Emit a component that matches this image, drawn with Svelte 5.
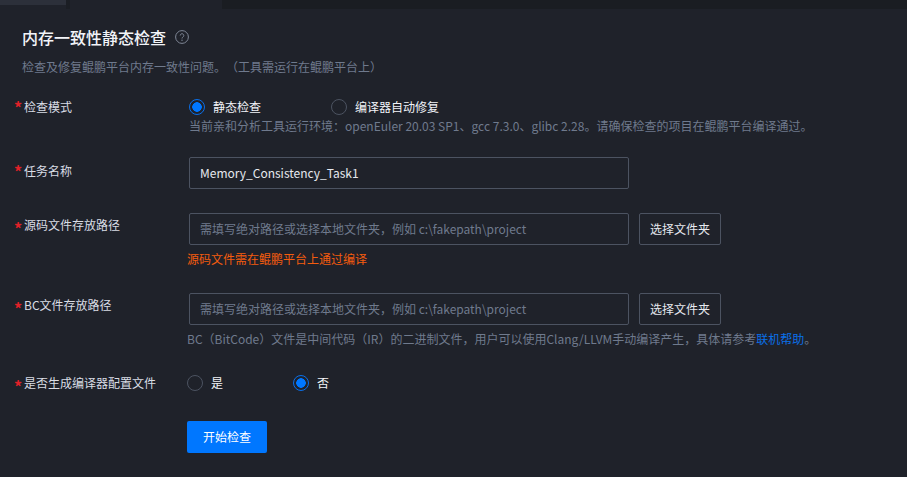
<script lang="ts">
  const placeholder = '需填写绝对路径或选择本地文件夹，例如 c:\\fakepath\\project';
</script>

<div class="page">
  <div class="tabs">
    <div class="tab-active"></div>
    <div class="tab-edge"></div>
    <div class="tab-current"></div>
    <div class="tab-rest"></div>
  </div>

  <div class="head">
    <h3 class="title">内存一致性静态检查</h3>
    <svg class="help" width="14" height="14" viewBox="0 0 14 14" fill="none">
      <circle cx="7" cy="7" r="6.4" stroke="#7f8796" stroke-width="1" />
      <path d="M5.2 5.5a1.8 1.8 0 1 1 2.7 1.6c-.6.35-.9.7-.9 1.4" stroke="#7f8796" stroke-width="1" />
      <circle cx="7" cy="10.2" r=".7" fill="#7f8796" />
    </svg>
  </div>
  <p class="desc">检查及修复鲲鹏平台内存一致性问题。（工具需运行在鲲鹏平台上）</p>

  <div class="row row-mode">
    <span class="label">检查模式</span>
    <div class="field field-mode">
      <div class="radios radios-mode">
        <span class="radio-item item-static"><i class="radio on"></i>静态检查</span>
        <span class="radio-item"><i class="radio"></i>编译器自动修复</span>
      </div>
      <div class="hint hint-mode">当前亲和分析工具运行环境：openEuler 20.03 SP1、gcc 7.3.0、glibc 2.28。请确保检查的项目在鲲鹏平台编译通过。</div>
    </div>
  </div>

  <div class="row row-name">
    <span class="label">任务名称</span>
    <div class="field field-input">
      <div class="input value">Memory_Consistency_Task1</div>
    </div>
  </div>

  <div class="row row-src">
    <span class="label low">源码文件存放路径</span>
    <div class="field">
      <div class="input-line">
        <div class="input">{placeholder}</div>
        <div class="btn-outline">选择文件夹</div>
      </div>
      <div class="error">源码文件需在鲲鹏平台上通过编译</div>
    </div>
  </div>

  <div class="row row-bc">
    <span class="label low">BC文件存放路径</span>
    <div class="field">
      <div class="input-line">
        <div class="input">{placeholder}</div>
        <div class="btn-outline">选择文件夹</div>
      </div>
      <div class="hint">BC（BitCode）文件是中间代码（IR）的二进制文件，用户可以使用Clang/LLVM手动编译产生，具体请参考<span class="link">联机帮助</span>。</div>
    </div>
  </div>

  <div class="row row-config">
    <span class="label low">是否生成编译器配置文件</span>
    <div class="field">
      <div class="radios">
        <span class="radio-item item-yes"><i class="radio"></i>是</span>
        <span class="radio-item"><i class="radio on"></i>否</span>
      </div>
    </div>
  </div>

  <div class="submit">开始检查</div>
</div>

<style>
  :global(body) {
    background: #1f222a;
  }

  .page {
    height: 477px;
    overflow: hidden;
    background: #1f222a;
    color: #e6e9ef;
    font-family: "Noto Sans CJK SC", "Noto Sans", sans-serif;
    font-size: 12px;
    line-height: 18px;
    text-spacing-trim: space-all;
  }

  .tabs {
    display: flex;
    height: 9px;
  }

  .tab-active {
    width: 66px;
    height: 5px;
    background: #2c303a;
  }

  .tab-edge {
    width: 4px;
    background: #1b1e24;
  }

  .tab-current {
    width: 152px;
    background: #1f222a;
  }

  .tab-rest {
    flex: 1;
    background: #1a1d22;
  }

  .head {
    display: flex;
    align-items: center;
    gap: 9px;
    margin: 16px 0 0 22px;
    height: 24px;
  }

  .title {
    margin: 0;
    font-size: 16px;
    font-weight: 500;
    color: #f2f4f8;
  }

  .desc {
    margin: 9px 0 0 22px;
    color: #6f7a8d;
    line-height: 18px;
  }

  .row {
    display: flex;
  }

  .label {
    position: relative;
    width: 163px;
    margin-left: 24px;
    color: #d9dde5;
    line-height: 18px;
  }

  .label::before {
    content: "*";
    position: absolute;
    left: -10px;
    top: 0;
    color: #e02128;
    font-size: 16px;
    font-weight: 700;
  }

  .label.low::before {
    top: 3px;
  }

  .row-mode {
    margin-top: 22px;
  }

  .field-mode {
    padding-left: 2px;
  }

  .radios {
    display: flex;
    height: 18px;
    align-items: center;
  }

  .radio-item {
    display: flex;
    align-items: center;
    color: #f2f4f8;
  }

  .item-static {
    width: 142px;
  }

  .item-yes {
    width: 106px;
  }

  .radio {
    box-sizing: border-box;
    width: 16px;
    height: 16px;
    margin-right: 8px;
    border: 1px solid #4c5361;
    border-radius: 50%;
  }

  .radio.on {
    border-color: #0a6fe8;
    background: radial-gradient(circle, #0077ff 0 4.5px, transparent 5px);
  }

  .hint {
    margin-top: 5px;
    color: #6f7a8d;
  }

  .hint-mode {
    margin-top: 1px;
  }

  .link {
    color: #0a6fe8;
  }

  .row-name {
    margin-top: 22px;
    height: 32px;
  }

  .row-name .label {
    margin-top: 5px;
  }

  .field-input {
    padding-left: 2px;
  }

  .input {
    box-sizing: border-box;
    width: 440px;
    height: 32px;
    padding: 0 10px;
    border: 1px solid #4c5361;
    border-radius: 2px;
    color: #6f7a8d;
    line-height: 30px;
    white-space: nowrap;
  }

  .input.value {
    color: #e6e9ef;
  }

  .row-src {
    margin-top: 24px;
  }

  .row-src .label,
  .row-bc .label {
    margin-top: 3px;
  }

  .input-line {
    display: flex;
    gap: 10px;
    margin-left: 2px;
  }

  .btn-outline {
    box-sizing: border-box;
    width: 82px;
    height: 32px;
    border: 1px solid #4c5361;
    border-radius: 2px;
    color: #e6e9ef;
    text-align: center;
    line-height: 30px;
  }

  .error {
    margin-top: 5px;
    color: #f45c0e;
  }

  .row-bc {
    margin-top: 25px;
  }

  .row-config {
    margin-top: 26px;
  }

  .submit {
    width: 80px;
    height: 32px;
    margin: 29px 0 0 187px;
    border-radius: 2px;
    background: #0077ff;
    color: #fff;
    text-align: center;
    line-height: 32px;
  }
</style>
